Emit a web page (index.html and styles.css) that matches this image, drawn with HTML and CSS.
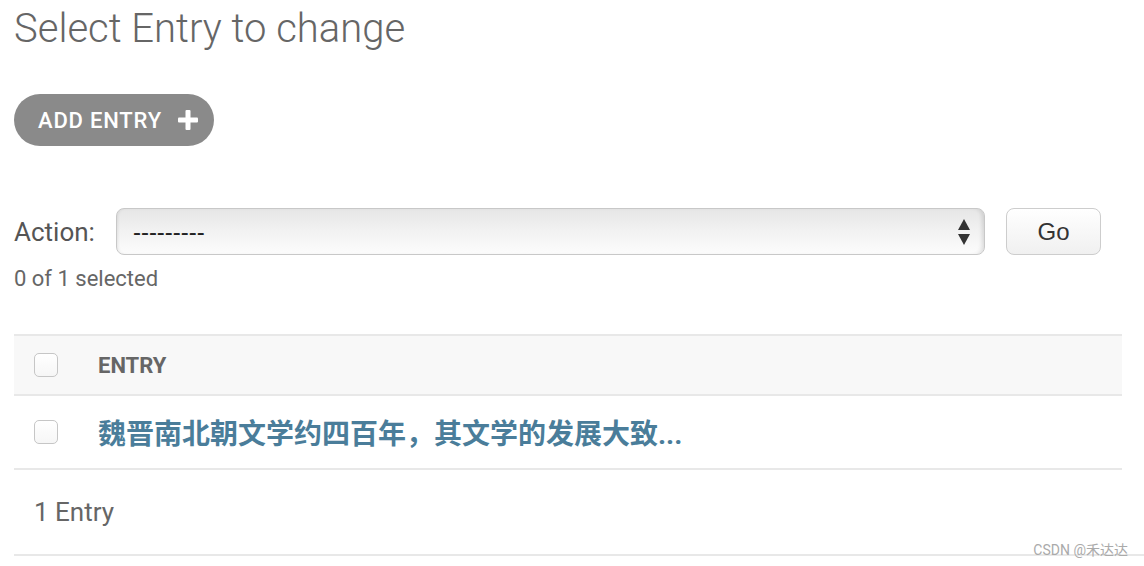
FILE: index.html
```html
<!DOCTYPE html>
<html lang="en">
<head>
    <meta charset="UTF-8">
    <title>Select Entry to change</title>
    <link rel="stylesheet" href="styles.css">
</head>
<body>

    <div class="content">
        <h1>Select Entry to change</h1>

        <div class="tools">
            <a href="#" class="addlink">
                ADD ENTRY
                <svg width="20" height="20" viewBox="0 0 20 20">
                    <rect x="7.5" y="0" width="5" height="20" rx="1" fill="#fff"/>
                    <rect x="0" y="7.5" width="20" height="5" rx="1" fill="#fff"/>
                </svg>
            </a>
        </div>

        <div class="actions">
            <label>Action:</label>
            <div class="select">
                <span>---------</span>
                <svg width="12" height="26" viewBox="0 0 12 26">
                    <polygon points="6,0 12,11 0,11" fill="#333"/>
                    <polygon points="0,15 12,15 6,26" fill="#333"/>
                </svg>
            </div>
            <button class="go">Go</button>
        </div>
        <p class="counter">0 of 1 selected</p>

        <table class="result-list">
            <thead>
                <tr>
                    <th class="check-col"><span class="checkbox"></span></th>
                    <th>ENTRY</th>
                </tr>
            </thead>
            <tbody>
                <tr>
                    <td class="check-col"><span class="checkbox"></span></td>
                    <td><a href="#">魏晋南北朝文学约四百年，其文学的发展大致...</a></td>
                </tr>
            </tbody>
        </table>

        <p class="paginator">1 Entry</p>
    </div>

    <div class="watermark">CSDN @禾达达</div>

</body>
</html>
```

FILE: styles.css
```css
body {
    font-family: Roboto, "Noto Sans CJK SC", sans-serif;
    background-color: #fff;
    color: #333;
    margin: 0;
    padding: 0;
}

.content {
    padding: 0 22px 0 14px;
}

h1 {
    font-size: 40px;
    font-weight: 300;
    line-height: 48px;
    color: #666;
    margin: 5px 0 0 0;
}

.tools {
    margin-top: 41px;
    display: flex;
}

.addlink {
    display: flex;
    align-items: center;
    gap: 16px;
    height: 52px;
    padding: 0 16px 0 24px;
    border-radius: 26px;
    background-color: #8a8a8a;
    color: #fff;
    font-size: 22px;
    font-weight: 500;
    letter-spacing: 0.8px;
    text-decoration: none;
}

.actions {
    margin: 62px 21px 0 0;
    display: flex;
    align-items: center;
    gap: 21px;
    height: 47px;
}

.actions label {
    font-size: 26px;
    color: #555;
}

.select {
    flex: 1;
    height: 47px;
    box-sizing: border-box;
    display: flex;
    align-items: center;
    justify-content: space-between;
    padding: 0 14px 0 16px;
    border: 1px solid #c8c8c8;
    border-radius: 8px;
    background: linear-gradient(#e6e6e6, #f1f1f1 45%, #fcfcfc);
    box-shadow: inset -4px 0 4px -2px rgba(0, 0, 0, 0.12), inset 3px 0 3px -2px rgba(0, 0, 0, 0.08);
    font-family: "Liberation Sans", Arial, sans-serif;
    font-size: 24px;
    color: #222;
}

.go {
    width: 95px;
    height: 47px;
    border: 1px solid #cdcdcd;
    border-radius: 8px;
    background: linear-gradient(#fff, #f0f0f0);
    font-family: "Liberation Sans", Arial, sans-serif;
    font-size: 24px;
    color: #333;
    padding: 0;
}

.counter {
    font-size: 22px;
    line-height: 30px;
    color: #666;
    margin: 9px 0 0 0;
}

.result-list {
    width: 100%;
    margin-top: 40px;
    border-collapse: collapse;
}

.result-list th, .result-list td {
    text-align: left;
    padding: 0;
    vertical-align: middle;
}

.result-list thead tr {
    background-color: #f8f8f8;
    height: 60px;
    border-top: 2px solid #e8e8e8;
    border-bottom: 2px solid #e8e8e8;
}

.result-list th {
    font-size: 22px;
    font-weight: 700;
    color: #666;
}

.result-list tbody tr {
    height: 74px;
    border-bottom: 2px solid #e8e8e8;
}

.result-list .check-col {
    width: 84px;
    padding-left: 20px;
    box-sizing: border-box;
}

.checkbox {
    display: block;
    width: 24px;
    height: 24px;
    box-sizing: border-box;
    border: 1px solid #c6c6c6;
    border-radius: 5px;
    background: linear-gradient(#fff, #f6f6f6);
}

.result-list a {
    font-size: 28px;
    font-weight: 700;
    color: #4a7d9a;
    text-decoration: none;
}

.paginator {
    height: 84px;
    margin: 0 -22px 0 0;
    padding-left: 20px;
    display: flex;
    align-items: center;
    font-size: 26px;
    color: #666;
    border-bottom: 2px solid #e8e8e8;
}

.watermark {
    position: absolute;
    top: 539px;
    right: 16px;
    font-size: 14px;
    color: #aaa;
    background-color: transparent;
}
```
